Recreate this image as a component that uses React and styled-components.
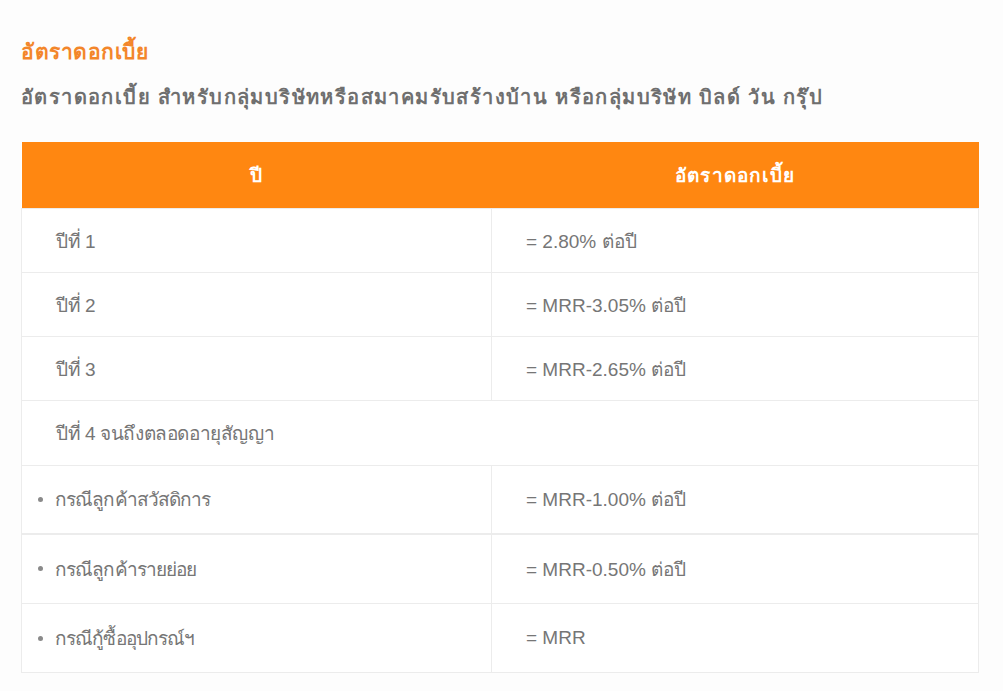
import React from "react";
import styled, { createGlobalStyle } from "styled-components";

const Global = createGlobalStyle`
  html, body { margin: 0; padding: 0; background: #fdfdfd; }
  body { font-family: "Liberation Sans", Arial, "Noto Sans", sans-serif; }
`;

const Page = styled.div`
  width: 1003px;
  height: 691px;
  box-sizing: border-box;
  padding: 37px 25px 0 21px;
  overflow: hidden;
`;

const Title = styled.h2`
  margin: 0;
  color: #f3862a;
  font-size: 21px;
  font-weight: bold;
  letter-spacing: 0.5px;
  line-height: 30px;
`;

const Subtitle = styled.h3`
  margin: 15px 0 0;
  color: #6f6f6f;
  font-size: 20px;
  font-weight: bold;
  letter-spacing: 1.4px;
  line-height: 30px;
  white-space: nowrap;
`;

const Table = styled.table`
  margin-top: 30px;
  width: 957px;
  border-collapse: collapse;
  background: #fff;
  table-layout: fixed;
`;

const Th = styled.th`
  background: #ff8711;
  color: #fff;
  font-size: 19px;
  font-weight: bold;
  letter-spacing: 1.2px;
  height: 66px;
  padding: 0;
  text-align: center;
`;

const Td = styled.td`
  border: 1px solid #ececec;
  border-top-width: ${(p) => (p.$thick ? "2px" : "1px")};
  height: ${(p) => p.$h}px;
  padding: 0 0 0 ${(p) => (p.$bullet ? 16 : 34)}px;
  color: #767676;
  font-size: 19px;
  letter-spacing: ${(p) => (p.$bullet ? "-0.9px" : p.$thai ? "-0.4px" : "0")};
  vertical-align: middle;
  box-sizing: border-box;
`;

const Bullet = styled.span`
  display: inline-flex;
  align-items: center;
  &::before {
    content: "";
    width: 5px;
    height: 5px;
    border-radius: 50%;
    background: #8a8a8a;
    margin-right: 12px;
  }
`;

const rows = [
  { a: "ปีที่ 1", b: "= 2.80% ต่อปี", h: 64 },
  { a: "ปีที่ 2", b: "= MRR-3.05% ต่อปี", h: 64 },
  { a: "ปีที่ 3", b: "= MRR-2.65% ต่อปี", h: 64 },
  { a: "ปีที่ 4 จนถึงตลอดอายุสัญญา", span: true, h: 65 },
  { a: "กรณีลูกค้าสวัสดิการ", b: "= MRR-1.00% ต่อปี", bullet: true, h: 68 },
  { a: "กรณีลูกค้ารายย่อย", b: "= MRR-0.50% ต่อปี", bullet: true, h: 70, thick: true },
  { a: "กรณีกู้ซื้ออุปกรณ์ฯ", b: "= MRR", bullet: true, h: 69 },
];

export default function App() {
  return (
    <Page>
      <Global />
      <Title>อัตราดอกเบี้ย</Title>
      <Subtitle>อัตราดอกเบี้ย สำหรับกลุ่มบริษัทหรือสมาคมรับสร้างบ้าน หรือกลุ่มบริษัท บิลด์ วัน กรุ๊ป</Subtitle>
      <Table>
        <colgroup>
          <col style={{ width: "470px" }} />
          <col style={{ width: "487px" }} />
        </colgroup>
        <thead>
          <tr>
            <Th>ปี</Th>
            <Th>อัตราดอกเบี้ย</Th>
          </tr>
        </thead>
        <tbody>
          {rows.map((r, i) => (
            <tr key={i}>
              {r.span ? (
                <Td colSpan={2} $h={r.h} $thai>{r.a}</Td>
              ) : (
                <>
                  <Td $h={r.h} $bullet={r.bullet} $thick={r.thick} $thai>
                    {r.bullet ? <Bullet>{r.a}</Bullet> : r.a}
                  </Td>
                  <Td $h={r.h} $thick={r.thick}>{r.b}</Td>
                </>
              )}
            </tr>
          ))}
        </tbody>
      </Table>
    </Page>
  );
}
